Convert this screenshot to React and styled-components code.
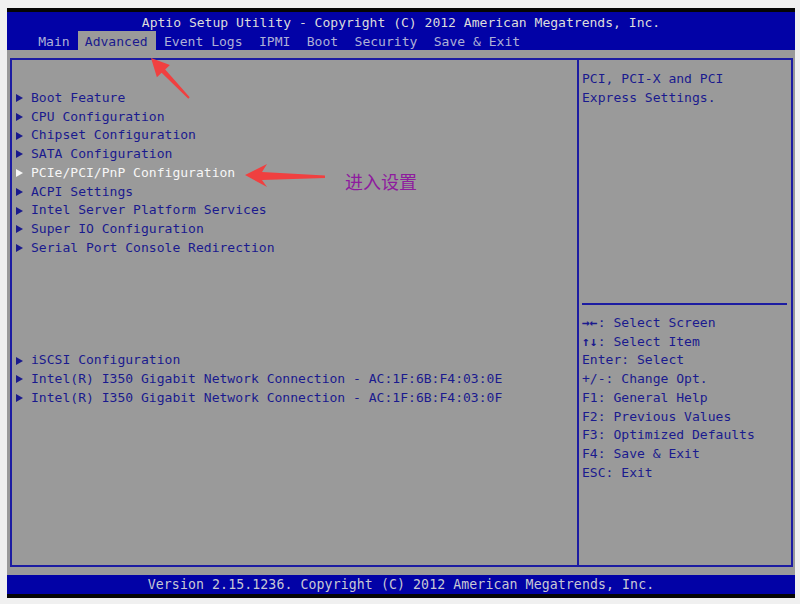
import React from 'react'
import styled, { createGlobalStyle } from 'styled-components'

const ROW = 18.75

const GlobalStyle = createGlobalStyle`
  html, body {
    margin: 0;
    padding: 0;
    background: #f0f0f0;
  }
  body {
    width: 800px;
    height: 604px;
    overflow: hidden;
  }
`

const Page = styled.div`
  position: relative;
  width: 800px;
  height: 604px;
  box-sizing: border-box;
  padding: 8px 0 0 7px;
  font-family: "DejaVu Sans Mono", "Liberation Mono", monospace;
  font-size: 13.05px;
`

const Screen = styled.div`
  width: 788px;
  height: 590px;
  display: flex;
  flex-direction: column;
  background: #9a9a9a;
  border-top: 4.4px solid #050505;
  border-bottom: 4.4px solid #050505;
  box-sizing: border-box;
`

const Header = styled.header`
  background: #0202a6;
  display: flex;
  flex-direction: column;
`

const Title = styled.div`
  height: ${ROW}px;
  line-height: ${ROW + 3}px;
  text-align: center;
  color: #dcdcdc;
  white-space: pre;
`

const Tabs = styled.nav`
  display: flex;
  height: ${ROW}px;
  line-height: ${ROW + 3}px;
  padding-left: 23px;
`

const Tab = styled.div`
  padding: 0 8.2px 0 ${p => (p.$active ? 7 : 8.2)}px;
  white-space: pre;
  color: ${p => (p.$active ? '#1a1a8e' : '#aeb0d6')};
  background: ${p => (p.$active ? '#9a9a9a' : 'transparent')};
`

const Body = styled.main`
  flex: 1;
  display: flex;
  flex-direction: column;
  padding: 8.5px 2px 8.5px 2.5px;
`

const Panel = styled.section`
  flex: 1;
  display: flex;
  border: 2px solid #1c1ca2;
`

const MenuPane = styled.div`
  width: 561.5px;
  border-right: 2px solid #1c1ca2;
  padding: 10px 0 0 4px;
  box-sizing: content-box;
`

const HelpPane = styled.aside`
  flex: 1;
  padding: 10px 4px 0 3px;
  display: flex;
  flex-direction: column;
`

const Line = styled.div`
  height: ${ROW}px;
  line-height: ${ROW}px;
  white-space: pre;
  color: #1a1a8e;
`

const Keys = styled.b`
  font-weight: bold;
`

const Item = styled.div`
  display: flex;
  align-items: center;
  height: ${ROW}px;
  line-height: ${ROW}px;
  white-space: pre;
  color: ${p => (p.$selected ? '#f6f6f6' : '#1a1a8e')};
`

const Marker = styled.span`
  width: 0;
  height: 0;
  margin-right: 8.5px;
  border-left: 7px solid currentColor;
  border-top: 4px solid transparent;
  border-bottom: 4px solid transparent;
`

const Spacer = styled.div`
  height: ${p => p.$rows * ROW}px;
`

const Rule = styled.div`
  height: ${ROW}px;
  display: flex;
  align-items: center;
  &::before {
    content: '';
    flex: 1;
    height: 2px;
    background: #1c1ca2;
  }
`

const Footer = styled.footer`
  height: ${ROW}px;
  line-height: ${ROW + 1}px;
  background: #0202a6;
  color: #c8c8d4;
  text-align: center;
  font-size: 13.2px;
  letter-spacing: 0.1px;
  white-space: pre;
`

const Overlay = styled.svg`
  position: absolute;
  left: 0;
  top: 0;
  pointer-events: none;
`

const Note = styled.div`
  position: absolute;
  left: 345px;
  top: 168px;
  font-family: "Noto Sans CJK SC", "Noto Sans", sans-serif;
  font-size: 18px;
  line-height: 26px;
  color: #8e1c9e;
`

const tabs = ['Main', 'Advanced', 'Event Logs', 'IPMI', 'Boot', 'Security', 'Save & Exit']

const topItems = [
  'Boot Feature',
  'CPU Configuration',
  'Chipset Configuration',
  'SATA Configuration',
  'PCIe/PCI/PnP Configuration',
  'ACPI Settings',
  'Intel Server Platform Services',
  'Super IO Configuration',
  'Serial Port Console Redirection',
]

const bottomItems = [
  'iSCSI Configuration',
  'Intel(R) I350 Gigabit Network Connection - AC:1F:6B:F4:03:0E',
  'Intel(R) I350 Gigabit Network Connection - AC:1F:6B:F4:03:0F',
]

const keys = [
  ['\u2192\u2190', ': Select Screen'],
  ['\u2191\u2193', ': Select Item'],
  ['', 'Enter: Select'],
  ['', '+/-: Change Opt.'],
  ['', 'F1: General Help'],
  ['', 'F2: Previous Values'],
  ['', 'F3: Optimized Defaults'],
  ['', 'F4: Save & Exit'],
  ['', 'ESC: Exit'],
]

export default function App() {
  return (
    <Page>
      <GlobalStyle />
      <Screen>
        <Header>
          <Title>Aptio Setup Utility - Copyright (C) 2012 American Megatrends, Inc.</Title>
          <Tabs>
            {tabs.map(t => (
              <Tab key={t} $active={t === 'Advanced'}>{t}</Tab>
            ))}
          </Tabs>
        </Header>

        <Body>
          <Panel>
            <MenuPane>
              <Spacer $rows={1} />
              {topItems.map(t => (
                <Item key={t} $selected={t.startsWith('PCIe')}>
                  <Marker />
                  {t}
                </Item>
              ))}
              <Spacer $rows={5} />
              {bottomItems.map(t => (
                <Item key={t}>
                  <Marker />
                  {t}
                </Item>
              ))}
            </MenuPane>

            <HelpPane>
              <Line>PCI, PCI-X and PCI</Line>
              <Line>Express Settings.</Line>
              <Spacer $rows={10} />
              <Rule />
              {keys.map(([arrows, text]) => (
                <Line key={text}>
                  {arrows && <Keys>{arrows}</Keys>}
                  {text}
                </Line>
              ))}
            </HelpPane>
          </Panel>
        </Body>

        <Footer>Version 2.15.1236. Copyright (C) 2012 American Megatrends, Inc.</Footer>
      </Screen>

      {/* red call-outs drawn over the screenshot */}
      <Overlay width="800" height="604" viewBox="0 0 800 604">
        <polygon
          fill="#f04040"
          points="151,58 169.9,64.9 165.2,69.4 189.7,97.3 188.3,98.7 161.6,72.8 156.9,77.3"
        />
        <polygon
          fill="#f04040"
          points="245,175 267,164 262,172 325,175.5 325,178 262,180 267,187"
        />
      </Overlay>
      <Note>进入设置</Note>
    </Page>
  )
}
